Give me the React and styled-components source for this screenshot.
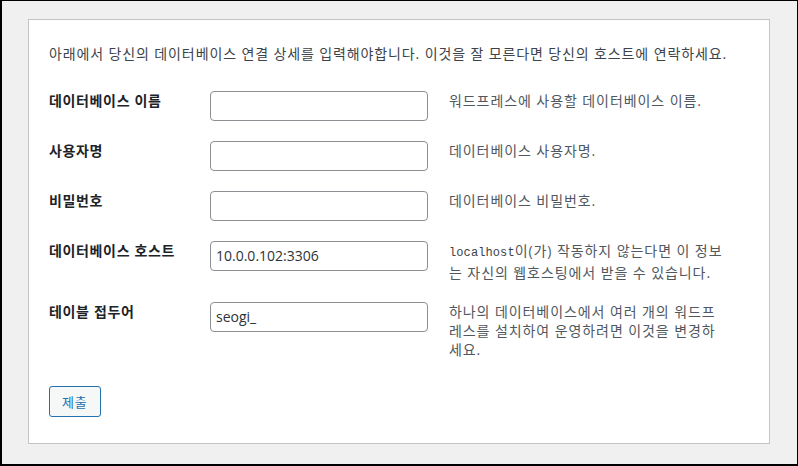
import React from 'react';
import styled, { createGlobalStyle } from 'styled-components';

const GlobalStyle = createGlobalStyle`
  html, body {
    margin: 0;
    padding: 0;
    background: #000;
  }
  body {
    font-family: "Open Sans", "Noto Sans CJK KR", sans-serif;
    font-size: 14px;
    line-height: 19px;
    color: #3c434a;
  }
`;

const Frame = styled.div`
  box-sizing: border-box;
  width: 798px;
  height: 466px;
  border-style: solid;
  border-color: #000;
  border-width: 1px 1px 2px 2px;
  background: #f0f0f1;
  padding: 18px 0 0 26px;
`;

const Card = styled.div`
  box-sizing: border-box;
  width: 742px;
  background: #fff;
  border: 1px solid #c3c4c7;
  padding: 24px 20px 26px 20px;
`;

const Intro = styled.p`
  margin: 0 0 17px 0;
  line-height: 19.6px;
  letter-spacing: 0.88px;
  color: #3c434a;
`;

const Row = styled.div`
  display: grid;
  grid-template-columns: 161px 218px 1fr;
  align-items: start;
  padding: 10px 0;
`;

const Label = styled.label`
  font-weight: 700;
  color: #1d2327;
  line-height: 19.6px;
  letter-spacing: 0.65px;
`;

const Field = styled.input`
  box-sizing: border-box;
  width: 218px;
  height: 30px;
  margin: 0;
  padding: 0 5px;
  border: 1px solid #8c8f94;
  border-radius: 4px;
  background: #fff;
  font-family: "Open Sans", sans-serif;
  font-size: 14px;
  color: #2c3338;
  outline: none;
`;

const Desc = styled.div`
  padding: 0 22px 0 21px;
  color: #50575e;
  line-height: 19px;
  letter-spacing: 0.92px;
  word-break: normal;
`;

const Code = styled.code`
  font-family: "Liberation Mono", monospace;
  font-size: 12px;
  letter-spacing: 0.1px;
  color: #3c434a;
`;

const Submit = styled.button`
  box-sizing: border-box;
  margin-top: 17px;
  height: 31px;
  padding: 0 12px;
  border: 1px solid #2271b1;
  border-radius: 3px;
  background: #f6f7f7;
  color: #2271b1;
  font-family: "Noto Sans CJK KR", sans-serif;
  font-size: 13px;
  letter-spacing: 0.8px;
  line-height: 1;
  cursor: pointer;
`;

const fields = [
  { id: 'dbname', label: '데이터베이스 이름', value: '', desc: '워드프레스에 사용할 데이터베이스 이름.' },
  { id: 'uname', label: '사용자명', value: '', desc: '데이터베이스 사용자명.' },
  { id: 'pwd', label: '비밀번호', value: '', desc: '데이터베이스 비밀번호.' },
  {
    id: 'dbhost',
    label: '데이터베이스 호스트',
    value: '10.0.0.102:3306',
    desc: (
      <>
        <Code>localhost</Code>이(가) 작동하지 않는다면 이 정보는 자신의 웹호스팅에서 받을 수 있습니다.
      </>
    )
  },
  {
    id: 'prefix',
    label: '테이블 접두어',
    value: 'seogi_',
    desc: '하나의 데이터베이스에서 여러 개의 워드프레스를 설치하여 운영하려면 이것을 변경하세요.'
  }
];

export default function App() {
  return (
    <Frame>
      <GlobalStyle />
      <Card>
        <Intro>
          아래에서 당신의 데이터베이스 연결 상세를 입력해야합니다. 이것을 잘 모른다면 당신의 호스트에 연락하세요.
        </Intro>
        {fields.map(f => (
          <Row key={f.id}>
            <Label htmlFor={f.id}>{f.label}</Label>
            <Field id={f.id} type="text" defaultValue={f.value} />
            <Desc>{f.desc}</Desc>
          </Row>
        ))}
        <Submit type="button">제출</Submit>
      </Card>
    </Frame>
  );
}
